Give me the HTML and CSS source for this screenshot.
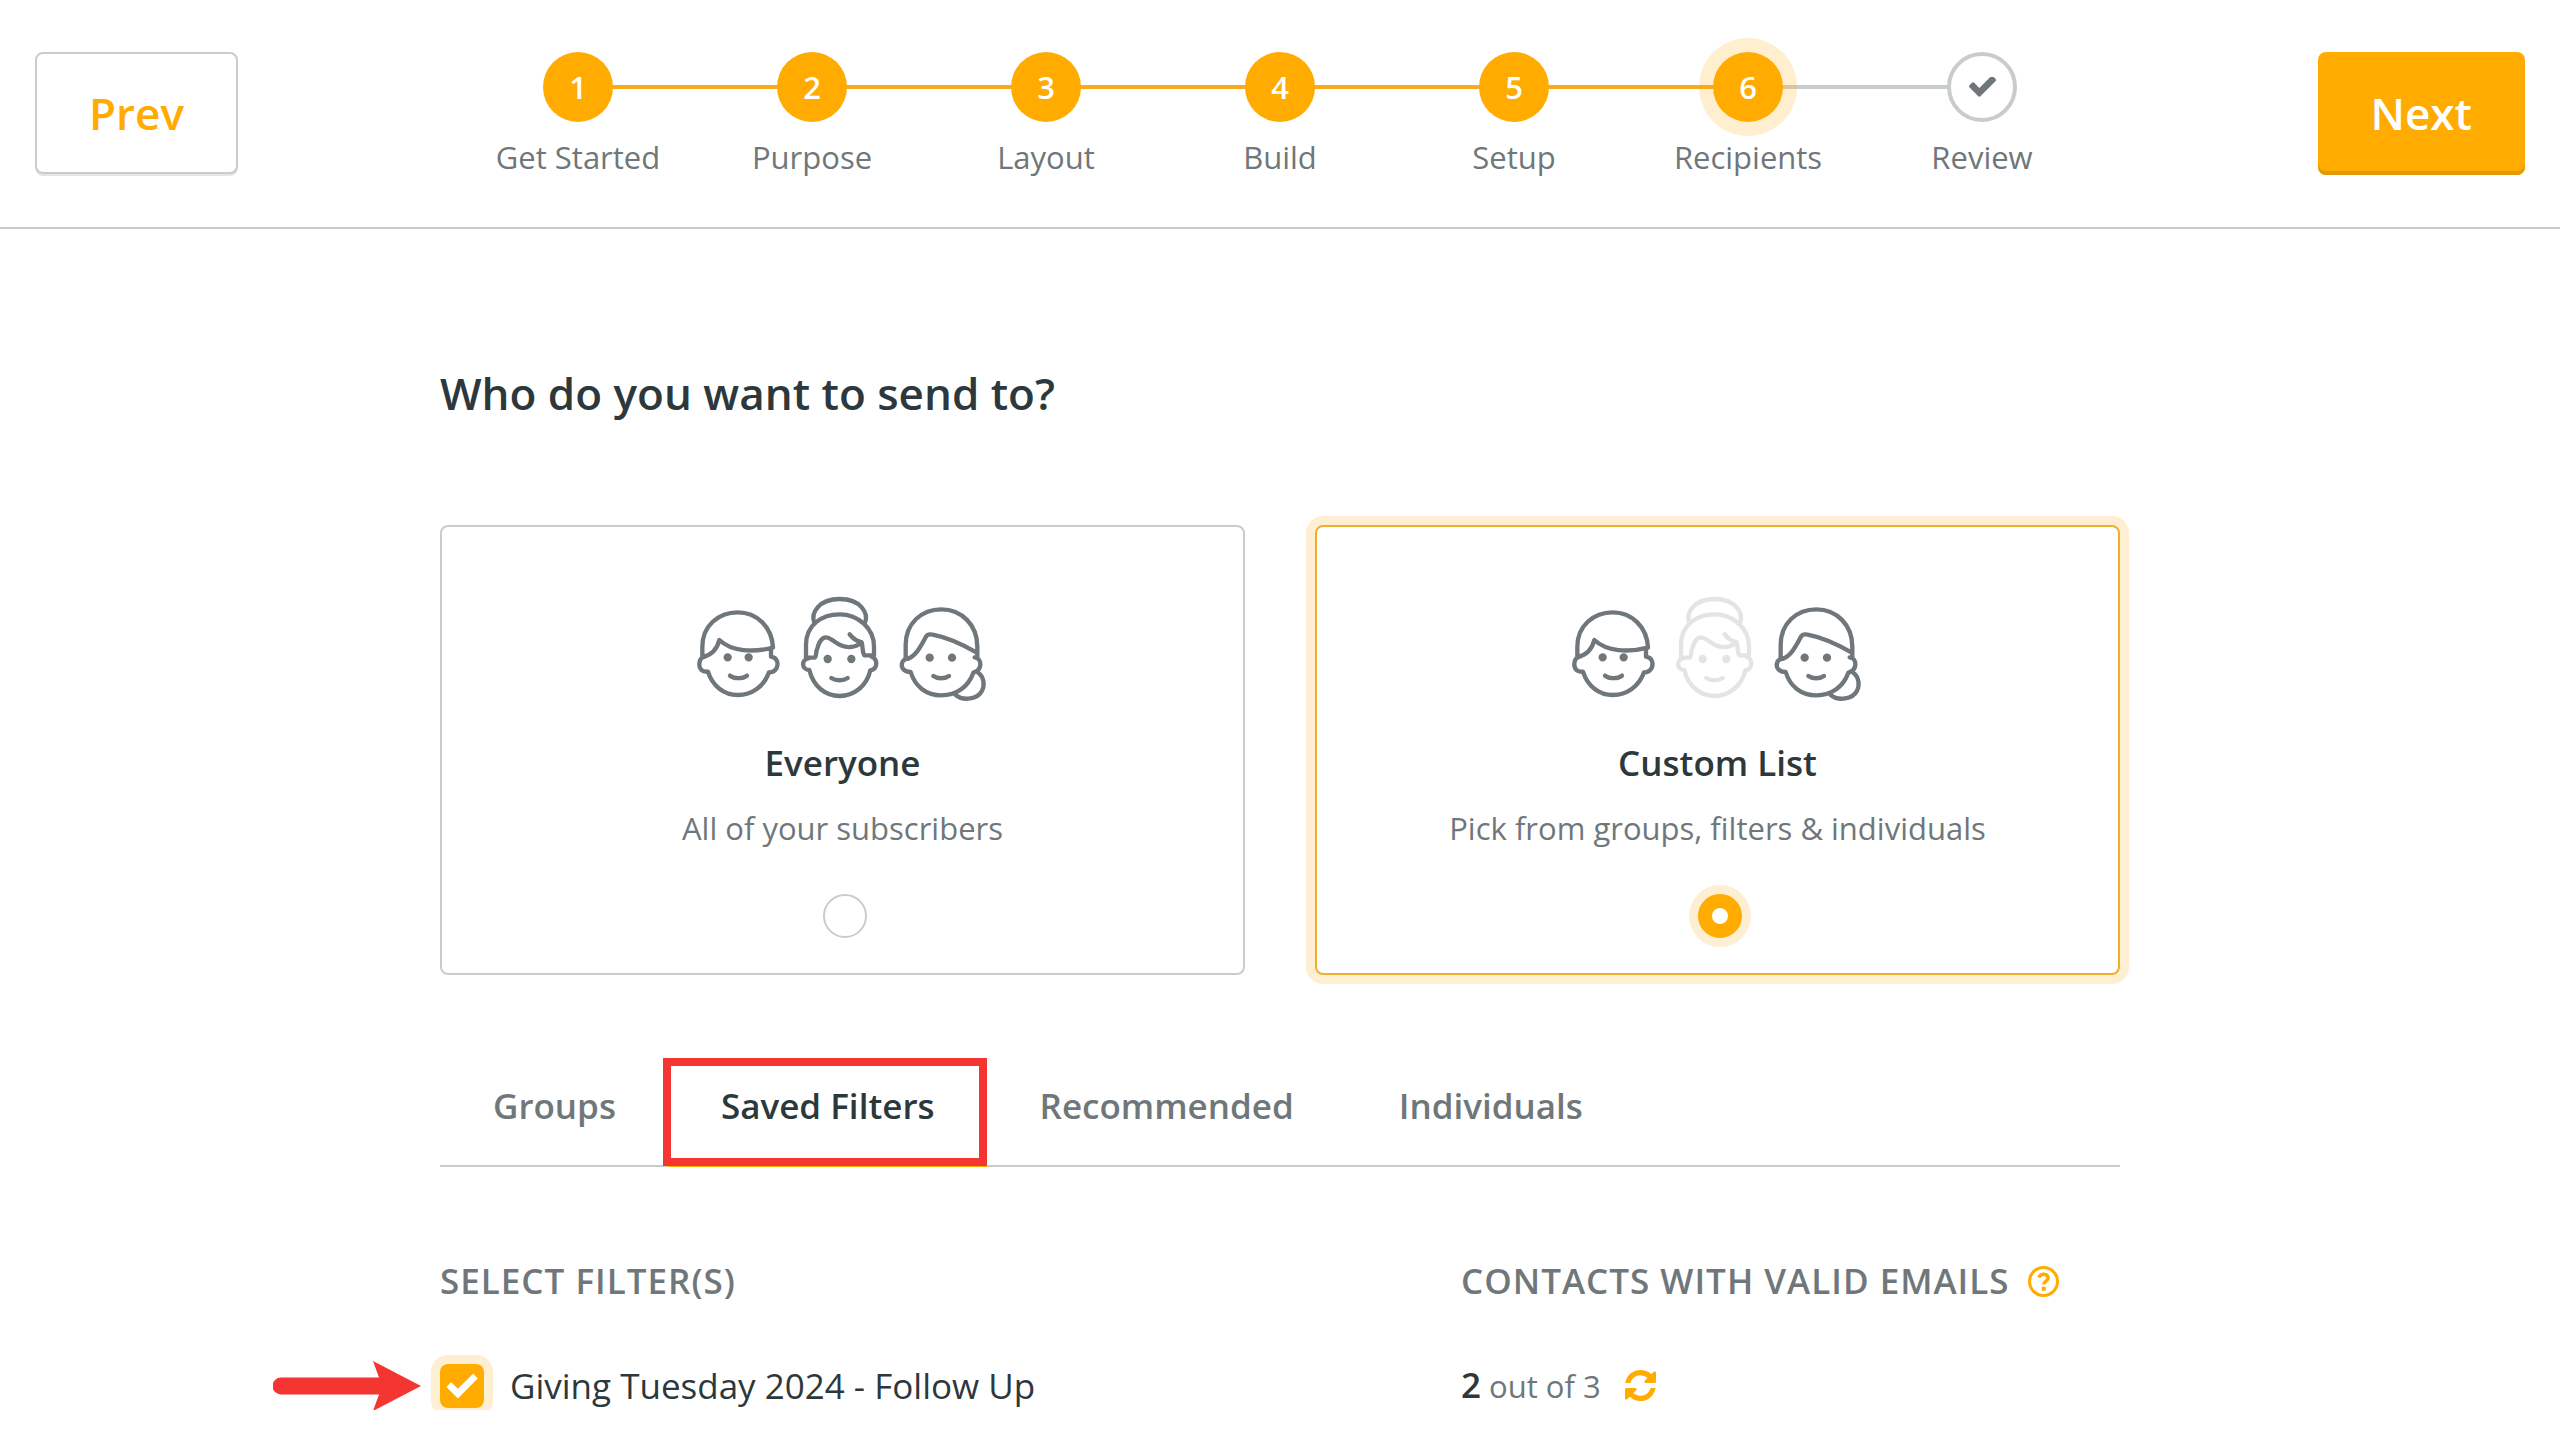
FILE: index.html
```html
<!DOCTYPE html>
<html lang="en">
<head>
<meta charset="utf-8">
<title>Recipients</title>
<link rel="stylesheet" href="styles.css">
</head>
<body>
<svg class="defs" aria-hidden="true">
  <symbol id="check" viewBox="120 400 1552 1190">
    <path d="M1671 566q0 40-28 68l-724 724-136 136q-28 28-68 28t-68-28l-136-136-362-362q-28-28-28-68t28-68l136-136q28-28 68-28t68 28l294 295 656-657q28-28 68-28t68 28l136 136q28 28 28 68z"/>
  </symbol>
  <symbol id="check-sharp" viewBox="65 77 94 76">
    <path d="M66 118L80 104L100 123L145 78L158 93L100 152Z"/>
  </symbol>
  <symbol id="face-short" viewBox="36 45 903 324">
    <path d="M67 230V200C67 138 115 97 173 97C230 97 276 140 279 203C220 218 155 215 118 180C112 205 95 225 68 231M273 205V230C292 233 296 250 290 264C285 274 276 277 267 277C252 320 215 345 174 345C132 345 97 318 84 275C65 277 57 265 58 251C59 238 66 231 75 230"/>
    <path d="M150 287C163 297 188 297 201 287"/>
    <circle cx="143" cy="232" r="6"/><circle cx="206" cy="232" r="6"/>
  </symbol>
  <symbol id="face-bun" viewBox="36 45 903 324">
    <path d="M403 128C392 100 415 57 479 57C543 57 566 100 555 128"/>
    <path d="M378 232V195C378 135 425 103 479 103C535 103 582 145 582 200V226H553C546 215 549 200 545 187C530 183 518 175 509 163M378 233H403C411 233 406 215 412 205C420 176 434 163 455 179C472 190 485 203 512 201C530 200 540 192 545 187"/>
    <path d="M575 230C594 237 594 267 571 271C560 320 520 348 479 348C437 348 400 320 388 270C365 270 362 238 386 235"/>
    <path d="M454 294C467 303 490 303 503 294"/>
    <circle cx="443" cy="237" r="6"/><circle cx="514" cy="237" r="6"/>
  </symbol>
  <symbol id="face-side" viewBox="36 45 903 324">
    <path d="M677 235V195C677 130 725 88 784 88C845 88 892 135 892 200V230M677 237C705 235 725 195 738 170C743 161 750 162 758 164C800 172 845 192 889 217"/>
    <path d="M884 232C907 235 908 270 880 278C865 320 830 346 784 346C740 346 705 320 692 276C670 276 663 262 666 250C668 240 675 237 684 236"/>
    <path d="M893 277C912 290 915 315 906 332C893 358 850 364 827 345"/>
    <path d="M760 288C772 297 795 297 807 288"/>
    <circle cx="749" cy="233" r="6"/><circle cx="816" cy="233" r="6"/>
  </symbol>
</svg>

<header class="topbar">
  <button class="btn btn-prev" type="button">Prev</button>
  <ol class="steps">
    <li class="step"><span class="dot">1</span><span class="step-name">Get Started</span></li>
    <li class="step"><span class="dot">2</span><span class="step-name">Purpose</span></li>
    <li class="step"><span class="dot">3</span><span class="step-name">Layout</span></li>
    <li class="step"><span class="dot">4</span><span class="step-name">Build</span></li>
    <li class="step"><span class="dot">5</span><span class="step-name">Setup</span></li>
    <li class="step current"><span class="dot">6</span><span class="step-name">Recipients</span></li>
    <li class="step todo"><span class="dot"><svg class="dot-check"><use href="#check"/></svg></span><span class="step-name">Review</span></li>
  </ol>
  <button class="btn btn-next" type="button">Next</button>
</header>

<main class="content">
  <h1 class="title">Who do you want to send to?</h1>

  <div class="cards">
    <label class="card">
      <svg class="faces"><use href="#face-short"/><use href="#face-bun"/><use href="#face-side"/></svg>
      <span class="card-name">Everyone</span>
      <span class="card-text">All of your subscribers</span>
      <input class="radio" type="radio" name="audience">
    </label>
    <label class="card selected">
      <svg class="faces"><use href="#face-short"/><use class="faded" href="#face-bun"/><use href="#face-side"/></svg>
      <span class="card-name">Custom List</span>
      <span class="card-text">Pick from groups, filters &amp; individuals</span>
      <input class="radio" type="radio" name="audience" checked>
    </label>
  </div>

  <nav class="tabs">
    <a class="tab" href="#groups">Groups</a>
    <a class="tab active" href="#filters">Saved Filters</a>
    <a class="tab" href="#recommended">Recommended</a>
    <a class="tab" href="#individuals">Individuals</a>
  </nav>

  <table class="filters">
    <thead>
      <tr>
        <th class="col-filter">SELECT FILTER(S)</th>
        <th>
          <span class="cell">CONTACTS WITH VALID EMAILS
            <svg class="icon" viewBox="0 0 31 31"><circle cx="15.500" cy="15.500" r="14" fill="none" stroke="currentColor" stroke-width="3"/><path d="M10.800 11.500C12 8.800 14 8.200 15.600 8.200C18 8.200 20.100 9.700 20.100 12C20.100 15.200 15.800 15 15.800 18.600" fill="none" stroke="currentColor" stroke-width="3.600"/><rect x="13.800" y="20.700" width="4" height="4" rx="0.500" fill="currentColor"/></svg>
          </span>
        </th>
      </tr>
    </thead>
    <tbody>
      <tr>
        <td>
          <label class="cell filter">
            <svg class="pointer" viewBox="0 0 148 50"><path d="M8 16.500H106L100 0L148 25L100 50L106 33.500H8A8.500 8.500 0 0 1 8 16.500Z"/></svg>
            <span class="check-wrap"><input class="check" type="checkbox" checked><svg class="check-mark"><use href="#check-sharp"/></svg></span>
            Giving Tuesday 2024 - Follow Up
          </label>
        </td>
        <td>
          <span class="cell count"><span><strong class="valid">2</strong> out of 3</span>
            <button class="refresh" type="button" aria-label="Refresh"><svg class="icon" viewBox="128 128 1536 1536"><path fill="currentColor" d="M1639 1056q0 5-1 7-64 268-268 434.500t-478 166.500q-146 0-282.500-55t-243.500-157l-129 129q-19 19-45 19t-45-19-19-45v-448q0-26 19-45t45-19h448q26 0 45 19t19 45-19 45l-137 137q71 66 161 102t187 36q134 0 250-65t186-179q11-17 53-117 8-23 30-23h192q13 0 22.500 9.500t9.500 22.500zm25-800v448q0 26-19 45t-45 19h-448q-26 0-45-19t-19-45 19-45l138-138q-148-137-349-137-134 0-250 65t-186 179q-11 17-53 117-8 23-30 23h-199q-13 0-22.500-9.500t-9.500-22.500v-7q65-268 270-434.500t480-166.500q146 0 284 55.500t245 156.500l130-129q19-19 45-19t45 19 19 45z"/></svg></button>
          </span>
        </td>
      </tr>
    </tbody>
  </table>
</main>
</body>
</html>
```
FILE: styles.css
```css
* { box-sizing: border-box; }

:root {
  --orange: #ffab00;
  --halo: #ffefd2;
  --gray: #6f777b;
  --ink: #2d383c;
  --line: #c9cccd;
}

body {
  margin: 0;
  background: #fff;
  color: var(--ink);
  font: 35px/48px "Open Sans", sans-serif;
}

.defs { position: absolute; width: 0; height: 0; }

/* Header */
.topbar {
  display: grid;
  grid-template-columns: 1fr auto 1fr;
  align-items: start;
  padding: 52px 35px 50px;
  border-bottom: 2px solid var(--line);
}

.btn {
  height: 123px;
  border-radius: 8px;
  font: 600 44px/60px "Open Sans", sans-serif;
}

.btn-prev {
  justify-self: start;
  height: 122px;
  padding: 0 52px;
  border: 2px solid var(--line);
  background: #fff;
  color: var(--orange);
  box-shadow: 0 2px 0 #e4e5e6;
}

.btn-next {
  justify-self: end;
  padding: 0 53px 2px;
  border: 0;
  background: var(--orange);
  color: #fff;
  box-shadow: inset 0 -4px 0 #e39a06;
}

.steps {
  display: flex;
  margin: 0;
  padding: 0;
  list-style: none;
}

.step {
  position: relative;
  display: flex;
  flex-direction: column;
  align-items: center;
  gap: 15px;
  width: 234px;
  font-size: 31px;
  line-height: 40px;
  color: var(--gray);
}

.step + .step::before {
  content: "";
  position: absolute;
  z-index: -1;
  top: 33px;
  right: 50%;
  width: 100%;
  height: 4px;
  background: #f5ab1c;
}

.step.todo::before { background: var(--line); }

.dot {
  display: flex;
  align-items: center;
  justify-content: center;
  width: 70px;
  height: 70px;
  border-radius: 50%;
  background: var(--orange);
  color: #fff;
  font-weight: 600;
}

.current .dot { box-shadow: 0 0 0 14px rgba(255, 171, 0, 0.19); }

.todo .dot {
  border: 4px solid var(--line);
  background: #fff;
}

.dot-check { width: 27px; height: 21px; fill: var(--gray); }

/* Content */
.content {
  max-width: 1680px;
  margin: 0 auto;
  padding-top: 134px;
}

.title {
  margin: 0 0 102px;
  font-size: 44px;
  line-height: 60px;
  font-weight: 600;
}

.cards {
  display: grid;
  grid-template-columns: 1fr 1fr;
  gap: 70px;
}

.card {
  display: flex;
  flex-direction: column;
  align-items: center;
  padding: 68px 32px 35px;
  border: 2px solid var(--line);
  border-radius: 8px;
}

.card.selected {
  border-color: #efae2c;
  box-shadow: 0 0 0 9px var(--halo);
}

.faces {
  width: 301px;
  height: 108px;
  margin-bottom: 36px;
  fill: none;
  stroke: var(--gray);
  stroke-width: 13;
  stroke-linecap: round;
  stroke-linejoin: round;
}

.faded { stroke: #e4e4e4; }

.card-name { font-weight: 600; }

.card-text {
  margin: 17px 0 42px;
  font-size: 31px;
  line-height: 48px;
  color: var(--gray);
}

.radio {
  appearance: none;
  width: 44px;
  height: 44px;
  margin: 0 0 0 5px;
  border: 2px solid var(--line);
  border-radius: 50%;
  background: #fff;
}

.radio:checked {
  border: 14px solid var(--orange);
  box-shadow: 0 0 0 9px var(--halo);
}

/* Tabs */
.tabs {
  display: flex;
  margin-top: 83px;
  border-bottom: 2px solid var(--line);
}

.tab {
  padding: 24px 52px 33px 53px;
  margin-bottom: -2px;
  color: var(--gray);
  font-weight: 600;
  text-decoration: none;
}

.tab.active {
  position: relative;
  border-bottom: 4px solid var(--orange);
  color: var(--ink);
}

/* Highlight box drawn over the active tab */
.tab.active::after {
  content: "";
  position: absolute;
  inset: 0 0 -3px -5px;
  border: 8px solid #f43531;
}

/* Filter table */
.filters {
  width: 100%;
  margin-top: 90px;
  border-collapse: collapse;
  table-layout: fixed;
  text-align: left;
}

.filters th, .filters td { padding: 0; }

.filters th {
  padding-bottom: 56px;
  color: var(--gray);
  font-weight: 600;
  letter-spacing: 1px;
}

.col-filter { width: 1021px; }

.cell {
  display: flex;
  align-items: center;
  gap: 18px;
}

.icon {
  display: block;
  width: 31px;
  height: 31px;
  color: var(--orange);
}

.filter { position: relative; gap: 26px; }

.pointer {
  position: absolute;
  right: calc(100% + 19px);
  width: 148px;
  height: 50px;
  fill: #f43531;
}

.check-wrap {
  display: grid;
  place-items: center;
}

.check {
  appearance: none;
  grid-area: 1 / 1;
  width: 44px;
  height: 44px;
  margin: 0;
  border-radius: 8px;
  background: var(--orange);
  box-shadow: 0 0 0 9px var(--halo);
}

.check-mark {
  grid-area: 1 / 1;
  width: 32px;
  height: 26px;
  fill: #fff;
}

.count {
  gap: 24px;
  font-size: 31px;
  color: var(--gray);
}

.valid {
  font-size: 35px;
  font-weight: 600;
  color: var(--ink);
}

.refresh {
  padding: 0;
  border: 0;
  background: none;
}
```
